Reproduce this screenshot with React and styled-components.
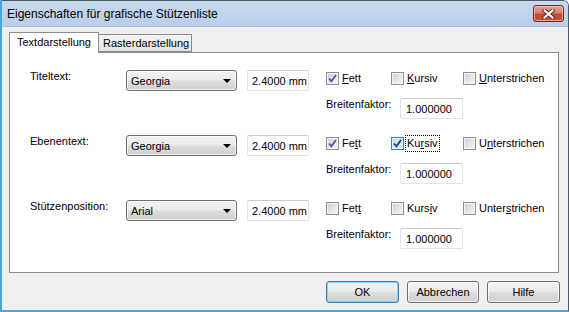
import React from "react";
import styled, { createGlobalStyle } from "styled-components";

const GlobalStyle = createGlobalStyle`
  html, body {
    margin: 0;
    padding: 0;
    background: #ffffff;
  }
  body {
    font-family: "Liberation Sans", Arial, sans-serif;
    font-size: 11px;
    color: #000000;
  }
`

const Window = styled.div`
  width: 569px;
  height: 312px;
  box-sizing: border-box;
  display: flex;
  flex-direction: column;
  overflow: hidden;

  background-color: #f0f0f0;
  border-top: 1px solid #4f5966;
  border-right: 1px solid #4f5966;
  border-left: 2px solid #4aa6de;
  border-bottom: 2px solid #4aa6de;
  border-top-right-radius: 6px;
`
const TitleBar = styled.div`
  flex: none;
  height: 26px;
  box-sizing: border-box;
  display: flex;
  flex-direction: row;
  justify-content: space-between;
  align-items: center;
  padding: 0 4px 0 5px;

  background: linear-gradient(#c6daf0, #bacfe8);
  border-bottom: 1px solid #aabed6;
`
const Title = styled.span`
  font-size: 12px;
  color: #000000;
`
const CloseBtn = styled.div`
  width: 31px;
  height: 17px;
  box-sizing: border-box;
  display: flex;
  align-items: center;
  justify-content: center;

  background: linear-gradient(#e3a697 0%, #d5806e 45%, #c4482f 55%, #c9553a 100%);
  border: 1px solid #6b2a1c;
  border-radius: 3px;
  box-shadow: inset 0 0 0 1px rgba(255, 210, 200, 0.6);
`
const Body = styled.div`
  flex: 1;
  display: flex;
  flex-direction: column;
  padding: 5px 9px 0 7px;
`
const TabStrip = styled.div`
  height: 21px;
  display: flex;
  flex-direction: row;
  align-items: flex-end;
  margin-bottom: -1px;
  position: relative;
  z-index: 1;
`
const Tab = styled.div`
  box-sizing: border-box;
  width: ${p => p.$width}px;
  height: ${p => (p.$active ? 21 : 18)}px;
  margin-bottom: ${p => (p.$active ? 0 : 1)}px;
  padding-left: ${p => (p.$active ? 7 : 4)}px;
  display: flex;
  align-items: center;

  background: ${p => (p.$active ? "#ffffff" : "linear-gradient(#f4f4f4, #e4e4e4)")};
  border: 1px solid #898c95;
  border-left-width: ${p => (p.$active ? 1 : 0)}px;
  border-bottom: ${p => (p.$active ? "none" : "1px solid #898c95")};
  line-height: 13px;
  padding-bottom: ${p => (p.$active ? 2 : 0)}px;
`
const Panel = styled.div`
  height: 221px;
  box-sizing: border-box;
  display: flex;
  flex-direction: column;
  gap: 17px;
  padding: 17px 0 0 20px;

  background-color: #ffffff;
  border: 1px solid #898c95;
`
const Row = styled.div`
  height: 48px;
  display: flex;
  flex-direction: row;
  align-items: flex-start;
`
const Label = styled.div`
  width: ${p => p.$width || 96}px;
  line-height: 13px;
  flex: none;
`
const Select = styled.div`
  width: 111px;
  height: 21px;
  box-sizing: border-box;
  margin-right: 10px;
  padding: 0 5px 0 4px;
  display: flex;
  flex-direction: row;
  align-items: center;
  justify-content: space-between;

  background: linear-gradient(#f2f2f2 0%, #ebebeb 45%, #dddddd 55%, #cfcfcf 100%);
  border: 1px solid #707070;
  border-radius: 3px;
  box-shadow: inset 0 0 0 1px rgba(255, 255, 255, 0.7);
`
const Arrow = styled.div`
  width: 0;
  height: 0;
  border-left: 4px solid transparent;
  border-right: 4px solid transparent;
  border-top: 4px solid #000000;
  margin-top: 1px;
`
const TextBox = styled.div`
  width: ${p => p.$width}px;
  height: 21px;
  box-sizing: border-box;
  padding: ${p => p.$pt || 0}px 0 0 ${p => p.$pl}px;
  display: flex;
  align-items: center;
  flex: none;

  background-color: #ffffff;
  border: 1px solid #e0e3e8;
  border-top-color: #c9ccd2;
  border-radius: 2px;
`
const Options = styled.div`
  margin-left: 17px;
  display: flex;
  flex-direction: column;
`
const CheckRow = styled.div`
  margin-top: 2px;
  height: 13px;
  display: grid;
  grid-template-columns: 65px 72px auto;
  align-items: center;
`
const CheckItem = styled.div`
  display: flex;
  flex-direction: row;
  align-items: center;
`
const Box = styled.div`
  width: 13px;
  height: 13px;
  box-sizing: border-box;
  display: flex;
  align-items: center;
  justify-content: center;

  border: 1px solid ${p => (p.$hot ? "#3c7fb1" : "#8e8f8f")};
  background: ${p => (p.$hot
    ? "linear-gradient(135deg, #b9dcf2, #eaf6fd)"
    : "linear-gradient(135deg, #cbcfd5, #f7f7f7)")};
  box-shadow: inset 0 0 0 1px ${p => (p.$hot ? "#def9fa" : "#f4f4f4")};
`
const CheckText = styled.span`
  margin-left: 3px;
  line-height: 13px;
  outline: ${p => (p.$focus ? "1px dotted #000000" : "none")};
  outline-offset: 1px;
`
const Key = styled.u`
  text-decoration: underline;
  text-underline-offset: 1px;
`
const FactorRow = styled.div`
  margin-top: 13px;
  display: flex;
  flex-direction: row;
  align-items: flex-start;
`
const Footer = styled.div`
  display: flex;
  flex-direction: row;
  justify-content: flex-end;
  gap: 8px;
  margin: 8px -1px 0 0;
`
const Button = styled.div`
  width: ${p => p.$width}px;
  height: 22px;
  box-sizing: border-box;
  display: flex;
  align-items: center;
  justify-content: center;

  background: linear-gradient(#f2f2f2 0%, #ebebeb 45%, #dddddd 55%, #cfcfcf 100%);
  border: 1px solid ${p => (p.$default ? "#3c7fb1" : "#707070")};
  border-radius: 3px;
  box-shadow: inset 0 0 0 1px ${p => (p.$default ? "#7fd3f6" : "rgba(255, 255, 255, 0.75)")};
`

const CloseIcon = () => (
  <svg width="13" height="10" viewBox="0 0 13 10">
    <path d="M2.5 1.5 L10.5 8.5 M10.5 1.5 L2.5 8.5" stroke="#5a2b22" strokeWidth="4" strokeLinecap="square" />
    <path d="M2.5 1.5 L10.5 8.5 M10.5 1.5 L2.5 8.5" stroke="#ffffff" strokeWidth="2.2" strokeLinecap="square" />
  </svg>
)

const Check = ({hot}) => (
  <svg width="9" height="9" viewBox="0 0 9 9">
    <path d="M1 4.5 L3.4 7.2 L8 1" fill="none" stroke={hot ? "#1f3c9c" : "#4a5e9c"} strokeWidth="1.8" />
  </svg>
)

const splitKey = (text, idx) => (
  <>
    {text.slice(0, idx)}
    <Key>{text[idx]}</Key>
    {text.slice(idx + 1)}
  </>
)

const Checkbox = ({label, keyIdx, checked, hot, focus}) => (
  <CheckItem>
    <Box $hot={hot}>{checked && <Check hot={hot}/>}</Box>
    <CheckText $focus={focus}>{splitKey(label, keyIdx)}</CheckText>
  </CheckItem>
)

const rows = [
  {label: "Titeltext:", font: "Georgia", keys: [0, 0, 0], checked: [true, false, false]},
  {label: "Ebenentext:", font: "Georgia", keys: [2, 2, 1], checked: [true, true, false], focus: true},
  {label: "Stützenposition:", font: "Arial", keys: [3, 4, 5], checked: [false, false, false]},
]

let App = () => {
  return (
    <Window>
      <GlobalStyle/>
      <TitleBar>
        <Title>Eigenschaften für grafische Stützenliste</Title>
        <CloseBtn><CloseIcon/></CloseBtn>
      </TitleBar>
      <Body>
        <TabStrip>
          <Tab $active $width={90}>Textdarstellung</Tab>
          <Tab $width={93}>Rasterdarstellung</Tab>
        </TabStrip>
        <Panel>
          {rows.map(r => (
            <Row key={r.label}>
              <Label>{r.label}</Label>
              <Select>
                <span>{r.font}</span>
                <Arrow/>
              </Select>
              <TextBox $width={62} $pl={4}>2.4000 mm</TextBox>
              <Options>
                <CheckRow>
                  <Checkbox label="Fett" keyIdx={r.keys[0]} checked={r.checked[0]}/>
                  <Checkbox label="Kursiv" keyIdx={r.keys[1]} checked={r.checked[1]} hot={r.focus} focus={r.focus}/>
                  <Checkbox label="Unterstrichen" keyIdx={r.keys[2]} checked={r.checked[2]}/>
                </CheckRow>
                <FactorRow>
                  <Label $width={74}>Breitenfaktor:</Label>
                  <TextBox $width={63} $pl={5} $pt={1}>1.000000</TextBox>
                </FactorRow>
              </Options>
            </Row>
          ))}
        </Panel>
        <Footer>
          <Button $default $width={73}>OK</Button>
          <Button $width={72}>Abbrechen</Button>
          <Button $width={73}>Hilfe</Button>
        </Footer>
      </Body>
    </Window>
  )
}
export default App;
